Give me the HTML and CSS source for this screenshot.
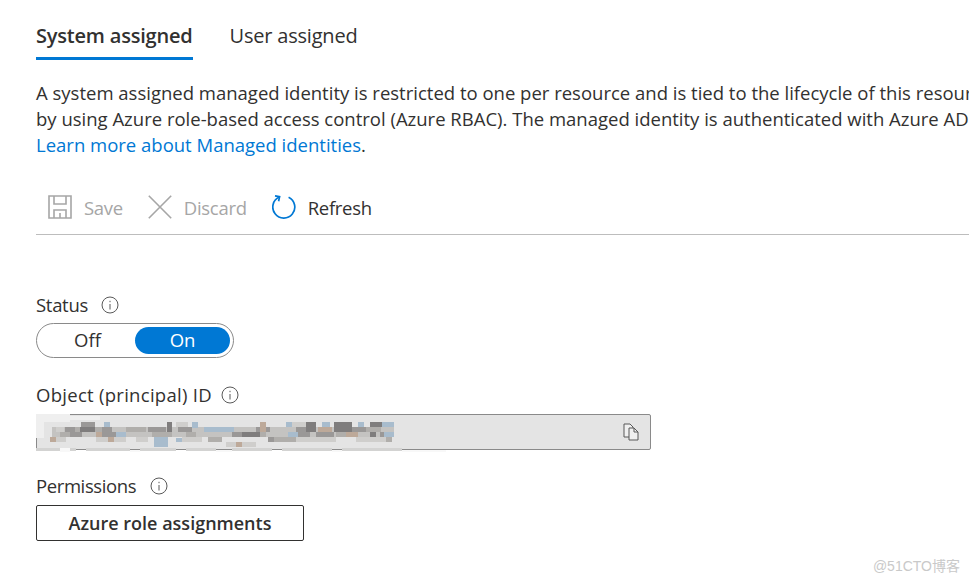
FILE: index.html
```html
<!DOCTYPE html>
<html lang="en">
<head>
  <meta charset="UTF-8">
  <meta name="viewport" content="width=device-width, initial-scale=1.0">
  <title>Identity</title>
  <link rel="stylesheet" href="styles.css">
</head>
<body>
  <div class="page">
    <div class="tabs">
      <div class="tab active">System assigned</div>
      <div class="tab">User assigned</div>
    </div>

    <div class="description">
      <p>A system assigned managed identity is restricted to one per resource and is tied to the lifecycle of this resource.</p>
      <p>by using Azure role-based access control (Azure RBAC). The managed identity is authenticated with Azure AD.</p>
      <p><a href="#">Learn more about Managed identities</a>.</p>
    </div>

    <div class="toolbar">
      <div class="tool disabled">
        <svg width="24" height="24" viewBox="0 0 24 24" fill="none" stroke="#a6a6a6" stroke-width="1.6">
          <path d="M1 1h22v22H1z"/>
          <path d="M6 1v8h12V1"/>
          <path d="M6 23v-8h12v8M12 18v5"/>
        </svg>
        <span>Save</span>
      </div>
      <div class="tool disabled">
        <svg width="24" height="24" viewBox="0 0 24 24" fill="none" stroke="#a6a6a6" stroke-width="1.6">
          <path d="M.8.8l22.4 22.4M23.2.8L.8 23.2"/>
        </svg>
        <span>Discard</span>
      </div>
      <div class="tool">
        <svg width="24" height="24" viewBox="0 0 24 24" fill="none" stroke="#0078d4" stroke-width="1.7">
          <path d="M16.6 2.2A11 11 0 1 1 7.2 2.1"/>
          <path d="M3 .8l4.6.9-1 4.6"/>
        </svg>
        <span>Refresh</span>
      </div>
    </div>

    <div class="field status-field">
      <div class="field-label">Status
        <svg class="info" width="18" height="18" viewBox="0 0 18 18" fill="none" stroke="#595959"><circle cx="9" cy="9" r="8"/><path d="M9 8v5.5M9 4.8v1.4"/></svg>
      </div>
      <div class="toggle">
        <div class="toggle-item">Off</div>
        <div class="toggle-item on">On</div>
      </div>
    </div>

    <div class="field id-field">
      <div class="field-label">Object (principal) ID
        <svg class="info" width="18" height="18" viewBox="0 0 18 18" fill="none" stroke="#595959"><circle cx="9" cy="9" r="8"/><path d="M9 8v5.5M9 4.8v1.4"/></svg>
      </div>
      <div class="id-box">
        <!-- pixelated id, the value is hidden in the original too -->
        <svg class="mosaic" width="412" height="40" viewBox="0 0 412 40">
          <path fill="#efefef" d="M0 0h34v8h-34zM34 2h30v4h-30zM0 8h8v16h-8z"/>
          <path fill="#d3d3d2" d="M0 34h24v3h-24zM34 34h6v3h-6zM50 34h44v3h-44zM104 34h36v3h-36zM150 34h30v3h-30zM196 34h40v3h-40zM246 34h50v3h-50zM306 34h60v3h-60z"/>
          <path fill="#f8f8f8" d="M24 34h10v4h-10zM94 36h10v2h-10zM180 36h16v2h-16zM296 36h10v2h-10zM366 36h44v2h-44z"/>
          <path fill="#c4c3c1" d="M16 13h342v10h-342z"/>
          <path fill="#cfcecc" d="M20 13h8v5h-8zM20 23h10v5h-10zM60 23h30v5h-30zM100 23h12v5h-12zM140 8h12v5h-12zM146 23h20v5h-20zM176 13h20v5h-20zM190 28h30v5h-30zM256 8h20v5h-20zM260 23h40v5h-40zM320 23h30v5h-30z"/>
          <path fill="#b0aeab" d="M24 18h10v5h-10zM39 13h6v5h-6zM54 13h12v5h-12zM90 13h20v5h-20zM116 18h20v5h-20zM150 18h10v5h-10zM172 23h14v5h-14zM206 18h24v5h-24zM236 23h24v5h-24zM300 18h20v5h-20zM330 13h15v5h-15zM350 23h6v5h-6z"/>
          <path fill="#9a9897" d="M29 13h10v5h-10zM45 8h14v5h-14zM34 18h12v5h-12zM66 13h10v10h-10zM76 18h14v5h-14zM112 13h18v5h-18zM142 13h14v5h-14zM196 18h24v5h-24zM220 13h14v5h-14zM232 23h6v5h-6zM260 13h14v10h-14zM280 18h18v5h-18zM316 13h14v5h-14zM344 18h10v5h-10z"/>
          <path fill="#7f7d7d" d="M44 13h15v5h-15zM131 8h5v10h-5zM206 18h18v5h-18zM270 8h10v10h-10zM298 8h18v10h-18zM334 8h12v5h-12zM334 18h6v5h-6z"/>
          <path fill="#bda999" d="M14 23h6v5h-6zM60 18h6v5h-6zM72 23h6v5h-6zM224 8h6v10h-6zM282 13h14v5h-14zM310 18h12v5h-12zM200 28h6v5h-6z"/>
          <path fill="#a8bccd" d="M68 8h6v5h-6zM80 18h10v5h-10zM118 23h14v10h-14zM156 8h6v6h-6zM168 13h30v5h-30zM250 8h6v5h-6zM252 18h10v5h-10zM286 8h8v5h-8zM322 8h6v5h-6zM346 8h12v5h-12zM348 18h10v5h-10zM140 24h6v4h-6z"/>
        </svg>
        <svg class="copy" width="16" height="18" viewBox="0 0 16 18" fill="#f0f0f0" stroke="#595959">
          <path d="M1 1h6l3 3v10H1z"/>
          <path d="M6 5h5l4 4v8H6z"/>
          <path d="M11 5v4h4" fill="none"/>
        </svg>
      </div>
    </div>

    <div class="field permissions-field">
      <div class="field-label">Permissions
        <svg class="info" width="18" height="18" viewBox="0 0 18 18" fill="none" stroke="#595959"><circle cx="9" cy="9" r="8"/><path d="M9 8v5.5M9 4.8v1.4"/></svg>
      </div>
      <button class="role-button">Azure role assignments</button>
    </div>
  </div>

  <div class="watermark">@51CTO博客</div>
</body>
</html>
```

FILE: styles.css
```css
body {
  margin: 0;
  height: 583px;
  overflow: hidden;
  background: #ffffff;
  color: #323130;
  font-family: 'Open Sans', Arial, sans-serif;
  font-size: 18.5px;
  position: relative;
}

.page {
  padding: 17px 0 0 36px;
}

.tabs {
  display: flex;
  gap: 37px;
}

.tab {
  font-size: 20px;
  line-height: 37px;
  padding-bottom: 3px;
  letter-spacing: -0.2px;
}

.tab.active {
  font-weight: 600;
  border-bottom: 3px solid #0078d4;
}

.description {
  margin-top: 20px;
  white-space: nowrap;
  line-height: 26px;
}

.description p {
  margin: 0;
}

.description a {
  color: #0078d4;
  text-decoration: none;
}

.toolbar {
  display: flex;
  align-items: center;
  height: 50px;
  margin-top: 24px;
  padding-left: 12px;
  padding-bottom: 2px;
  gap: 25px;
  border-bottom: 1px solid #bdbdbd;
  letter-spacing: -0.3px;
}

.tool {
  display: flex;
  align-items: center;
  gap: 12px;
}

.tool.disabled {
  color: #a6a6a6;
}

.field {
  margin-bottom: 23px;
}

.status-field {
  margin-top: 57px;
  margin-bottom: 24px;
}

.field-label {
  display: flex;
  align-items: center;
  line-height: 26px;
  margin-bottom: 6px;
}

.status-field .field-label {
  gap: 13px;
  margin-bottom: 5px;
  letter-spacing: -0.3px;
}

.id-field .field-label {
  gap: 9px;
  letter-spacing: 0.28px;
}

.permissions-field .field-label {
  gap: 14px;
  letter-spacing: -0.4px;
}

.toggle {
  display: flex;
  box-sizing: border-box;
  width: 198px;
  height: 35px;
  padding: 3px;
  border: 1px solid #8a8a8a;
  border-radius: 18px;
}

.toggle-item {
  flex: 1;
  text-align: center;
  line-height: 25px;
  border-radius: 14px;
}

.toggle-item.on {
  background: #0078d4;
  color: #ffffff;
}

.id-box {
  display: flex;
  align-items: center;
  justify-content: flex-end;
  position: relative;
  box-sizing: border-box;
  width: 615px;
  height: 36px;
  padding-right: 11px;
  background: #e4e4e4;
  border: 1px solid #8a8a8a;
  border-radius: 2px;
}

.mosaic {
  position: absolute;
  left: -1px;
  top: -1px;
  filter: blur(0.7px);
}

.role-button {
  display: block;
  width: 268px;
  height: 36px;
  padding: 0;
  background: #ffffff;
  border: 1px solid #323130;
  border-radius: 2px;
  color: #323130;
  font-family: inherit;
  font-size: 18px;
  font-weight: 600;
}

.watermark {
  position: absolute;
  right: 9px;
  bottom: 8px;
  color: #c9c9c9;
  font-family: 'Liberation Sans', 'Noto Sans CJK SC', sans-serif;
  font-size: 14px;
}
```
